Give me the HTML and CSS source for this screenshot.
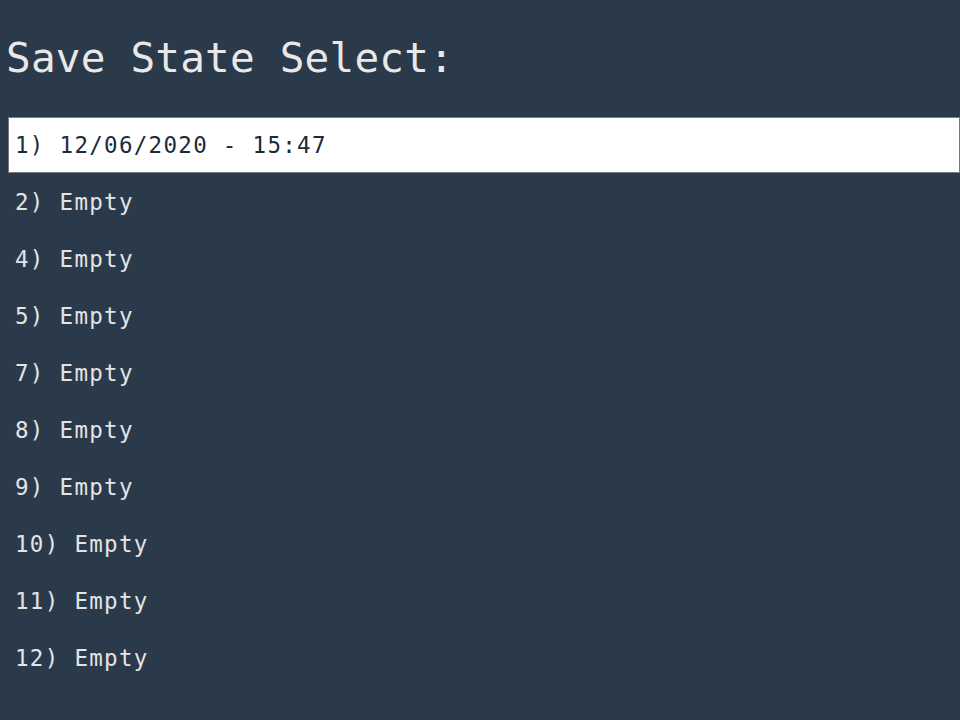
FILE: index.html
```html
<!DOCTYPE html>
<html>
<head>
<meta charset="utf-8">
<link rel="stylesheet" href="styles.css">
</head>
<body>
<div class="screen">
  <h1 class="title">Save State Select:</h1>
  <ul class="slots">
    <li class="slot selected">1) 12/06/2020 - 15:47</li>
    <li class="slot">2) Empty</li>
    <li class="slot">4) Empty</li>
    <li class="slot">5) Empty</li>
    <li class="slot">7) Empty</li>
    <li class="slot">8) Empty</li>
    <li class="slot">9) Empty</li>
    <li class="slot">10) Empty</li>
    <li class="slot">11) Empty</li>
    <li class="slot">12) Empty</li>
  </ul>
</div>
</body>
</html>
```
FILE: styles.css
```css
html, body {
  margin: 0;
  padding: 0;
  background: #2b3a4b;
  height: 100%;
}
body {
  padding: 8px 0 0 8px;
  box-sizing: border-box;
  font-family: "DejaVu Sans Mono", "Liberation Mono", monospace;
  color: #e6e6e6;
}
.screen {
  display: flex;
  flex-direction: column;
}
.title {
  margin: 26px 0 0 -2px;
  font-size: 41px;
  line-height: 48px;
  font-weight: normal;
  letter-spacing: 0.2px;
  color: #e8e8e8;
}
.slots {
  list-style: none;
  margin: 35px 0 0 0;
  padding: 0;
  display: flex;
  flex-direction: column;
  gap: 1px;
}
.slot {
  height: 56px;
  box-sizing: border-box;
  border: 1px solid transparent;
  padding: 1px 0 0 6px;
  line-height: 52px;
  font-size: 22.5px;
  letter-spacing: 1.3px;
  color: #e4e4e4;
}
.slot.selected {
  background: #ffffff;
  border-color: #7a7a7a;
  color: #1c2a3a;
}
```
